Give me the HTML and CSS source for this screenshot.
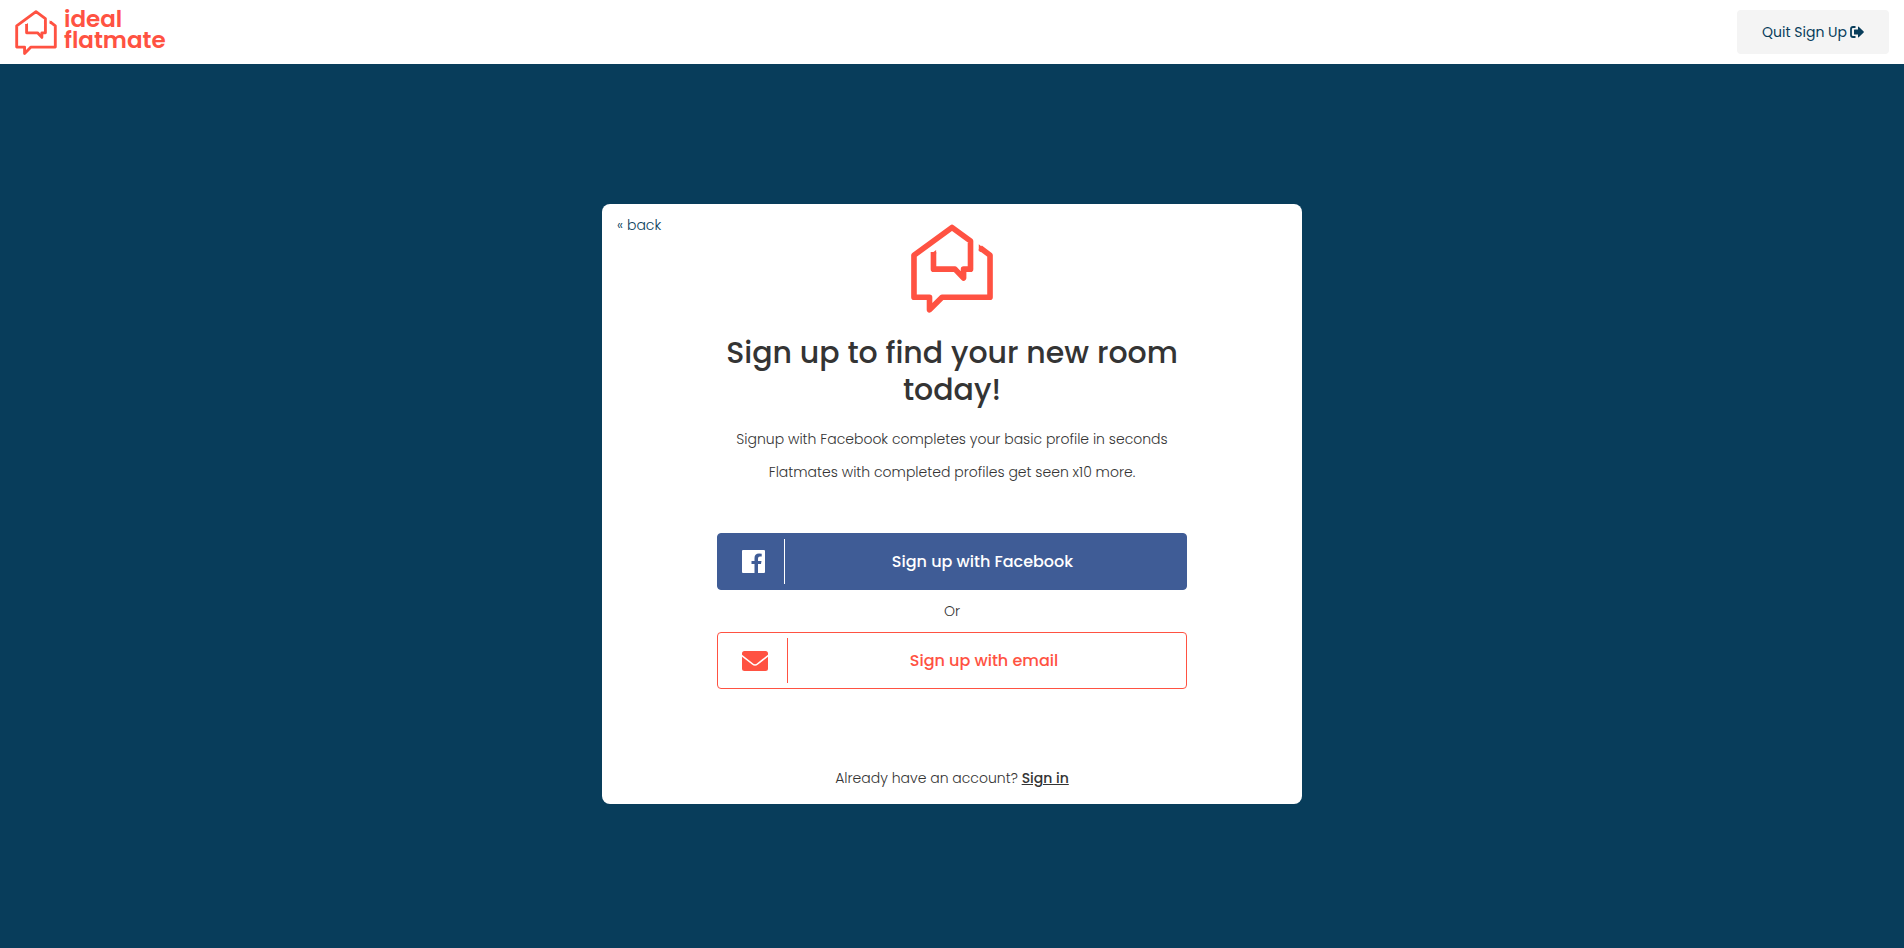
FILE: index.html
```html
<!DOCTYPE html>
<html lang="en">
<head>
<meta charset="utf-8">
<meta name="viewport" content="width=device-width, initial-scale=1">
<title>Sign up | ideal flatmate</title>
<link rel="stylesheet" href="styles.css">
</head>
<body>
<svg class="sprite" aria-hidden="true">
  <symbol id="house" viewBox="60 41 248 268">
    <path d="M128 125V177H193L219 204V177H240V92L184 51L69 135V262H116V300L154 262H299V135L269 112" fill="none" stroke="currentColor" stroke-width="17" stroke-linejoin="round"/>
    <path d="M120 131L136 119V131ZM265 102L279 113L272 126L265 122Z" fill="currentColor"/>
  </symbol>
</svg>
<header class="topbar">
  <a class="brand" href="#">
    <svg class="brand-mark" aria-hidden="true"><use href="#house"/></svg>
    <span class="brand-name"><span>ideal</span><span>flatmate</span></span>
  </a>
  <button class="quit" type="button">Quit Sign Up
    <svg class="quit-icon" viewBox="0 0 14 12" aria-hidden="true">
      <path d="M5.5 1H3Q1 1 1 3V9Q1 11 3 11H5.5" fill="none" stroke="currentColor" stroke-width="1.8"/>
      <path d="M4 4Q4 3.500 4.500 3.500H8V1Q8 .2 8.700 .7L13.700 5.500Q14 6 13.700 6.500L8.700 11.300Q8 11.800 8 11V8.500H4.500Q4 8.500 4 8Z" fill="currentColor"/>
    </svg>
  </button>
</header>
<main class="page">
  <section class="card">
    <a class="back" href="#">« back</a>
    <svg class="card-mark" aria-hidden="true"><use href="#house"/></svg>
    <div class="content">
      <h1 class="title">Sign up to find your new room today!</h1>
      <p class="lead">Signup with Facebook completes your basic profile in seconds</p>
      <p class="lead">Flatmates with completed profiles get seen x10 more.</p>
      <div class="actions">
        <button class="action facebook" type="button">
          <span class="action-icon"><svg class="fb-icon" viewBox="0 0 23 23" aria-hidden="true"><path d="M1 0H22Q23 0 23 1V22Q23 23 22 23H16V14H19L19.500 11H16V8.500Q16 6.600 18 6.600H19.700V3.700Q18.500 3.500 17 3.500Q12.500 3.500 12.500 8V11H9.500V14H12.500V23H1Q0 23 0 22V1Q0 0 1 0Z" fill="currentColor"/></svg></span>
          <span class="action-label">Sign up with Facebook</span>
        </button>
        <p class="or">Or</p>
        <button class="action email" type="button">
          <span class="action-icon"><svg class="mail-icon" viewBox="0 0 26 20" aria-hidden="true"><path d="M2.500 0H23.500Q26 0 26 2.500V3.700L15.500 12Q13 14.500 10.500 12L0 3.700V2.500Q0 0 2.500 0ZM0 5.800L10 13.500Q13 16 16 13.500L26 5.800V17.500Q26 20 23.500 20H2.500Q0 20 0 17.500Z" fill="currentColor"/></svg></span>
          <span class="action-label">Sign up with email</span>
        </button>
      </div>
    </div>
    <p class="signin">Already have an account? <a class="signin-link" href="#">Sign in</a></p>
  </section>
</main>
</body>
</html>
```
FILE: styles.css
```css
* { box-sizing: border-box; }
body {
  display: flex;
  flex-direction: column;
  min-height: 100vh;
  margin: 0;
  background: #083d5b;
  color: #343434;
  font: 300 14px/24px Poppins, Inter, "Open Sans", sans-serif;
}
button { font: inherit; cursor: pointer; }
p, h1 { margin: 0; }
.sprite { position: absolute; width: 0; height: 0; }
.topbar {
  display: flex;
  align-items: center;
  justify-content: space-between;
  height: 64px;
  padding: 0 15px;
  background: #fff;
}
.brand {
  display: flex;
  align-items: center;
  gap: 7px;
  color: #ff5242;
  text-decoration: none;
}
.brand-mark { width: 42px; height: 45px; }
.brand-name {
  display: flex;
  flex-direction: column;
  padding-bottom: 4px;
  font-size: 23px;
  font-weight: 600;
  line-height: 21px;
}
.quit {
  display: flex;
  align-items: center;
  gap: 3px;
  height: 44px;
  padding: 0 25px;
  border: 0;
  border-radius: 4px;
  background: #f4f4f4;
  color: #083d5b;
  font-weight: 400;
}
.quit-icon { width: 14px; height: 12px; }
.page {
  display: flex;
  flex: 1;
  align-items: flex-start;
  justify-content: center;
  padding: 140px 16px;
}
.card {
  position: relative;
  display: flex;
  flex-direction: column;
  align-items: center;
  width: 100%;
  max-width: 700px;
  min-height: 600px;
  padding: 20px 15px 14px;
  border-radius: 8px;
  background: #fff;
  text-align: center;
}
.back {
  position: absolute;
  top: 9px;
  left: 15px;
  color: #083d5b;
  text-decoration: none;
}
.card-mark { width: 82px; height: 89px; color: #ff5242; }
.content { width: 100%; max-width: 470px; }
.title {
  margin: 21px 0 19px;
  font-size: 30px;
  font-weight: 500;
  line-height: 37px;
}
.lead { margin-bottom: 9px; }
.actions { margin-top: 49px; }
.action {
  display: flex;
  align-items: center;
  width: 100%;
  height: 57px;
  padding: 5px 0;
  border: 1px solid;
  border-radius: 4px;
  font-size: 16px;
  font-weight: 500;
}
.facebook { border-color: #3f5c96; background: #3f5c96; color: #fff; }
.email { border-color: #ff5242; background: #fff; color: #ff5242; }
.action-icon {
  display: flex;
  align-items: center;
  align-self: stretch;
  padding: 0 19px 0 24px;
  border-right: 1px solid;
}
.fb-icon { width: 23px; height: 23px; }
.mail-icon { width: 26px; height: 20px; }
.action-label { flex: 1; padding-right: 6px; }
.or { padding: 9px 0; }
.signin { margin-top: auto; }
.signin-link { color: #343434; font-weight: 500; }
```
